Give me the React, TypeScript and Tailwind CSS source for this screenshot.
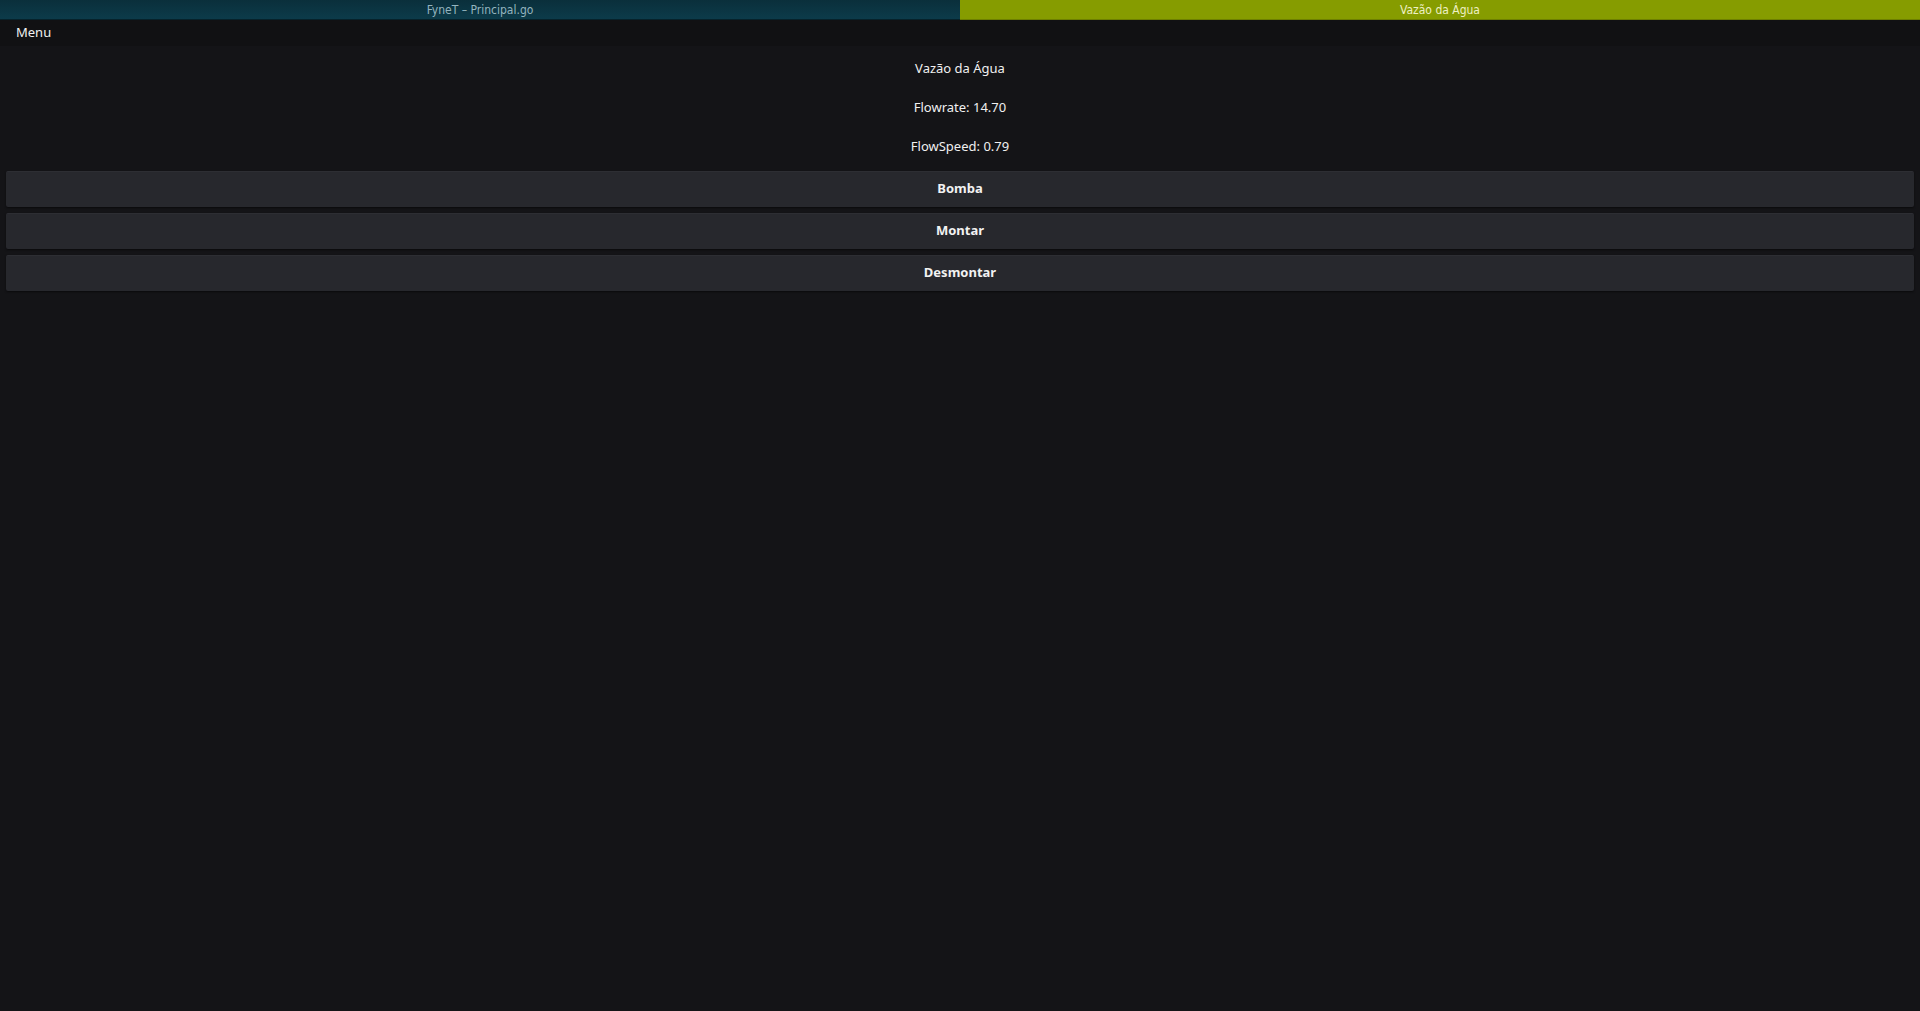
const buttons = ['Bomba', 'Montar', 'Desmontar'];

const readings = ['Vazão da Água', 'Flowrate: 14.70', 'FlowSpeed: 0.79'];

export default function App() {
  return (
    <div className="min-h-[1011px] w-full bg-[#141417] text-[#f0f0f0] font-['Noto_Sans',sans-serif]">
      {/* window title strip */}
      <div className="flex h-[20px] text-[12px] font-['DejaVu_Sans_Condensed','DejaVu_Sans',sans-serif]">
        <div className="flex flex-1 items-center justify-center pt-px bg-gradient-to-b from-[#0a2f3b] to-[#0c3b4a] border-b border-[#06222b] text-[#93b4bf]">
          FyneT – Principal.go
        </div>
        <div className="flex flex-1 items-center justify-center pt-px bg-[#869c00] border-b border-[#6d7f00] text-[#eef0c4]">
          Vazão da Água
        </div>
      </div>

      {/* menu bar */}
      <div className="flex h-[26px] items-center bg-[#111113] px-4 text-[13px]">Menu</div>

      {/* content */}
      <div className="flex flex-col pt-[3px]">
        {readings.map((r) => (
          <div key={r} className="flex h-[39px] items-center justify-center text-[13px]">
            {r}
          </div>
        ))}
      </div>

      <div className="mt-[5px] flex flex-col gap-[6px] px-[6px]">
        {buttons.map((b) => (
          <button
            key={b}
            className="h-[36px] w-full rounded-[2px] bg-[#27282d] border-t border-[#2d2e33] pb-px shadow-[0_1px_2px_rgba(0,0,0,0.5)] text-[13px] font-bold text-[#f2f2f2]"
          >
            {b}
          </button>
        ))}
      </div>
    </div>
  );
}
